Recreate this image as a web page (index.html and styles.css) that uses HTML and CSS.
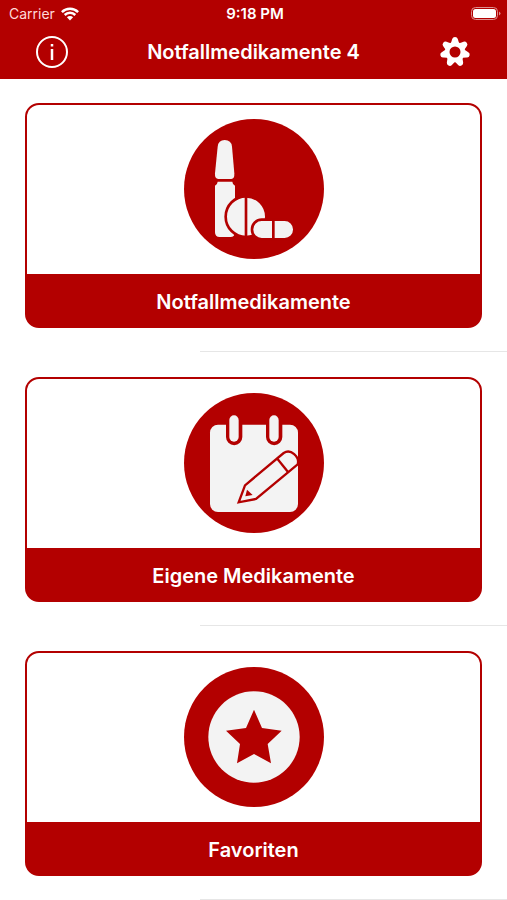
FILE: index.html
```html
<!DOCTYPE html>
<html lang="de">
<head>
<meta charset="utf-8">
<meta name="viewport" content="width=device-width, initial-scale=1">
<title>Notfallmedikamente 4</title>
<link rel="stylesheet" href="styles.css">
</head>
<body>
<header class="header">
  <div class="status">
    <div class="status-left">
      <span>Carrier</span>
      <svg class="wifi" viewBox="0 0 18 14" aria-hidden="true">
        <path d="M0.9 5.2a11.5 11.5 0 0 1 16.2 0M3.7 8a7.5 7.5 0 0 1 10.6 0"/>
        <path class="wifi-dot" d="M5.900 10.300a4.400 4.400 0 0 1 6.200 0L9 13.500z"/>
      </svg>
    </div>
    <span class="time">9:18 PM</span>
    <svg class="battery" viewBox="0 0 30 14" aria-hidden="true">
      <rect class="battery-case" x="0.500" y="0.500" width="26" height="12" rx="4"/>
      <rect class="battery-level" x="2" y="2" width="23" height="9" rx="2.500"/>
      <path class="battery-tip" d="M28 4.500q3 2 0 4z"/>
    </svg>
  </div>
  <nav class="nav">
    <button class="icon-button" type="button" aria-label="Information">
      <svg viewBox="0 0 32 32" aria-hidden="true">
        <circle class="info-ring" cx="16" cy="16" r="15"/>
        <path class="info-stem" d="M16 13V24M16 8v2.500"/>
      </svg>
    </button>
    <h1 class="title">Notfallmedikamente 4</h1>
    <button class="icon-button" type="button" aria-label="Einstellungen">
      <svg viewBox="-16 -16 32 32" aria-hidden="true">
        <defs><path id="tooth" d="M-5.500 -7.500Q-3.500 -9 -2.800 -13Q-2.200 -15 0 -15Q2.200 -15 2.800 -13Q3.500 -9 5.500 -7.500z"/></defs>
        <g class="gear">
          <use href="#tooth"/>
          <use href="#tooth" transform="rotate(51.430)"/>
          <use href="#tooth" transform="rotate(102.860)"/>
          <use href="#tooth" transform="rotate(154.290)"/>
          <use href="#tooth" transform="rotate(205.710)"/>
          <use href="#tooth" transform="rotate(257.140)"/>
          <use href="#tooth" transform="rotate(308.570)"/>
        </g>
        <circle class="gear-ring" r="7.500"/>
      </svg>
    </button>
  </nav>
</header>
<main class="list">
  <section class="row">
    <button class="card" type="button">
      <span class="picture">
        <svg viewBox="30 27 420 420" aria-hidden="true">
          <circle class="red" cx="240" cy="237" r="210"/>
          <path class="light" d="M131 110Q133 90 152 90Q172 90 174 110L181 190Q182 207 172 207H133Q122 207 123 190z"/>
          <path class="light" d="M131 215H175Q175 222 183 227V367Q183 381 169 381H137Q123 381 123 367V227Q131 222 131 215z"/>
          <circle class="light cut" cx="216" cy="320" r="61"/>
          <path class="gap" d="M216 256V384"/>
          <rect class="light cut" x="234" y="329" width="127" height="59" rx="29"/>
          <path class="gap" d="M298 328V389"/>
        </svg>
      </span>
      <span class="label">Notfallmedikamente</span>
    </button>
  </section>
  <section class="row">
    <button class="card" type="button">
      <span class="picture">
        <svg viewBox="30 27 420 420" aria-hidden="true">
          <circle class="red" cx="240" cy="237" r="210"/>
          <rect class="light" x="108" y="122" width="264" height="262" rx="24"/>
          <path class="red" d="M156 118H205V159a24.500 24.500 0 0 1-49 0zM276 118H325V159a24.500 24.500 0 0 1-49 0z"/>
          <rect class="light" x="166" y="94" width="28" height="79" rx="14"/>
          <rect class="light" x="286" y="94" width="28" height="79" rx="14"/>
          <path class="pencil" d="M194 355L213 304L329 207C350 193 378 218 371 241L246 345z"/>
          <path class="pencil" d="M310 224L342 264"/>
          <path class="red" d="M219 317L214 337L236 333z"/>
        </svg>
      </span>
      <span class="label">Eigene Medikamente</span>
    </button>
  </section>
  <section class="row">
    <button class="card" type="button">
      <span class="picture">
        <svg viewBox="30 27 420 420" aria-hidden="true">
          <circle class="red" cx="240" cy="237" r="210"/>
          <circle class="light" cx="240" cy="237" r="137"/>
          <path class="red" d="M240 155L264 210L323 218L281 258L291 316L240 288L189 316L198 258L156 218L216 210z"/>
        </svg>
      </span>
      <span class="label">Favoriten</span>
    </button>
  </section>
</main>
</body>
</html>
```
FILE: styles.css
```css
* {
  box-sizing: border-box;
}

body {
  margin: 0;
  background: #fff;
  color: #fff;
  font-family: Inter, "Liberation Sans", sans-serif;
}

button {
  margin: 0;
  padding: 0;
  border: 0;
  background: none;
  color: inherit;
  font: inherit;
}

svg {
  display: block;
}

.header {
  background: #b30000;
}

.status {
  display: grid;
  grid-template-columns: 1fr auto 1fr;
  align-items: center;
  height: 27px;
  padding: 0 6px 0 9px;
  font-size: 14px;
}

.status-left {
  display: flex;
  align-items: center;
  gap: 6px;
  color: #ffd9d9;
}

.wifi {
  width: 18px;
  height: 14px;
  fill: none;
  stroke: #fff;
  stroke-width: 2.5;
}

.wifi-dot {
  fill: #fff;
  stroke: none;
}

.time {
  font-size: 15px;
  font-weight: 600;
}

.battery {
  justify-self: end;
  width: 30px;
  height: 14px;
}

.battery-case {
  fill: none;
  stroke: #dc8f8f;
}

.battery-level {
  fill: #fff;
}

.battery-tip {
  fill: #dc8f8f;
}

.nav {
  display: flex;
  align-items: center;
  justify-content: space-between;
  height: 52px;
  padding: 0 36px 2px;
}

.icon-button {
  width: 32px;
  height: 32px;
}

.title {
  margin: 0;
  font-size: 20px;
  font-weight: 600;
}

.info-ring {
  fill: none;
  stroke: #fff;
  stroke-width: 2;
}

.info-stem {
  fill: none;
  stroke: #fff;
  stroke-width: 2.5;
}

.gear {
  fill: #fff;
}

.gear-ring {
  fill: #b30000;
  stroke: #fff;
  stroke-width: 4;
}

.list {
  display: grid;
  gap: 1px;
}

.row {
  padding: 24px 25px 23px;
  border-bottom: 1px solid;
  border-image: linear-gradient(to right, transparent 200px, #e6e6e6 200px) 1;
}

.card {
  display: block;
  width: 100%;
  border: 2px solid #b30000;
  border-radius: 14px;
  background: #b30000;
}

.picture {
  display: flex;
  justify-content: center;
  padding: 14px 0 15px;
  border-radius: 12px 12px 0 0;
  background: #fff;
}

.picture svg {
  width: 140px;
  height: 140px;
}

.label {
  display: block;
  padding-top: 4px;
  font-size: 20px;
  font-weight: 600;
  line-height: 48px;
}

.red {
  fill: #b30000;
}

.light {
  fill: #f3f3f3;
}

.cut {
  stroke: #b30000;
  stroke-width: 8;
}

.gap {
  stroke: #b30000;
  stroke-width: 8;
}

.pencil {
  fill: #f3f3f3;
  stroke: #b30000;
  stroke-width: 7;
}
```
